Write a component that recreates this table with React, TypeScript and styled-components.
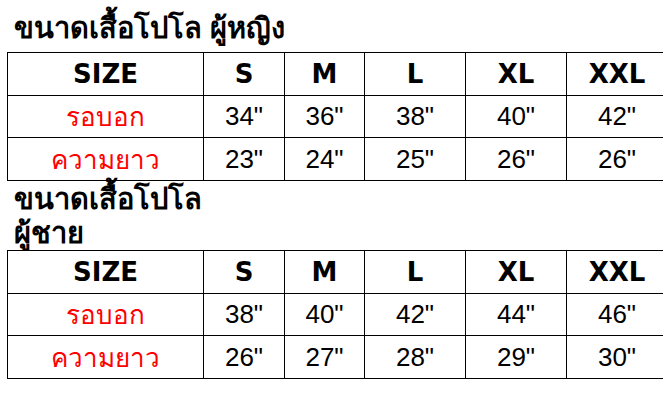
import React from "react";
import styled, { createGlobalStyle } from "styled-components";

const GlobalStyle = createGlobalStyle`
  html, body {
    margin: 0;
    padding: 0;
    background: #ffffff;
    overflow: hidden;
  }
  body {
    font-family: "Liberation Sans", "DejaVu Sans", sans-serif;
    color: #000000;
  }
`;

type SizeRow = { label: string; values: string[] };
type Chart = { title: React.ReactNode; rows: SizeRow[] };

const SIZES = ["S", "M", "L", "XL", "XXL"];
const WIDTHS = [196, 81, 80, 101, 101, 101];

const charts: Chart[] = [
  {
    title: "ขนาดเสื้อโปโล ผู้หญิง",
    rows: [
      { label: "รอบอก", values: ['34"', '36"', '38"', '40"', '42"'] },
      { label: "ความยาว", values: ['23"', '24"', '25"', '26"', '26"'] },
    ],
  },
  {
    title: (
      <>
        ขนาดเสื้อโปโล
        <br />
        ผู้ชาย
      </>
    ),
    rows: [
      { label: "รอบอก", values: ['38"', '40"', '42"', '44"', '46"'] },
      { label: "ความยาว", values: ['26"', '27"', '28"', '29"', '30"'] },
    ],
  },
];

export default function App() {
  return (
    <Page>
      <GlobalStyle />
      {charts.map((chart, i) => (
        <Section key={i}>
          <Title $first={i === 0}>{chart.title}</Title>
          <Table>
            <colgroup>
              {WIDTHS.map((w, j) => (
                <col key={j} style={{ width: w }} />
              ))}
            </colgroup>
            <tbody>
              <Row $h={43}>
                <HeadCell>SIZE</HeadCell>
                {SIZES.map((s) => (
                  <HeadCell key={s}>{s}</HeadCell>
                ))}
              </Row>
              {chart.rows.map((row, r) => (
                <Row key={row.label} $h={r === 0 ? 42 : 43}>
                  <LabelCell>{row.label}</LabelCell>
                  {row.values.map((v, k) => (
                    <ValueCell key={k}>{v}</ValueCell>
                  ))}
                </Row>
              ))}
            </tbody>
          </Table>
        </Section>
      ))}
    </Page>
  );
}

const Page = styled.div`
  padding: 11px 0 0 7px;
  width: 700px;
`;

const Section = styled.section``;

const Title = styled.h2<{ $first?: boolean }>`
  margin: ${(p) => (p.$first ? "0 0 7px 7px" : "1px 0 0 7px")};
  font-size: 29px;
  font-weight: bold;
  line-height: 34px;
`;

const Table = styled.table`
  border-collapse: collapse;
  table-layout: fixed;
  width: 661px;
`;

const Row = styled.tr<{ $h: number }>`
  height: ${(p) => p.$h}px;
`;

const Cell = styled.td`
  border: 1px solid #000000;
  padding: 0;
  text-align: center;
  vertical-align: middle;
  white-space: nowrap;
`;

const HeadCell = styled(Cell)`
  font-family: "DejaVu Sans", sans-serif;
  font-weight: bold;
  font-size: 26px;
`;

const LabelCell = styled(Cell)`
  color: #ff0000;
  font-size: 26px;
`;

const ValueCell = styled(Cell)`
  font-size: 26px;
`;
